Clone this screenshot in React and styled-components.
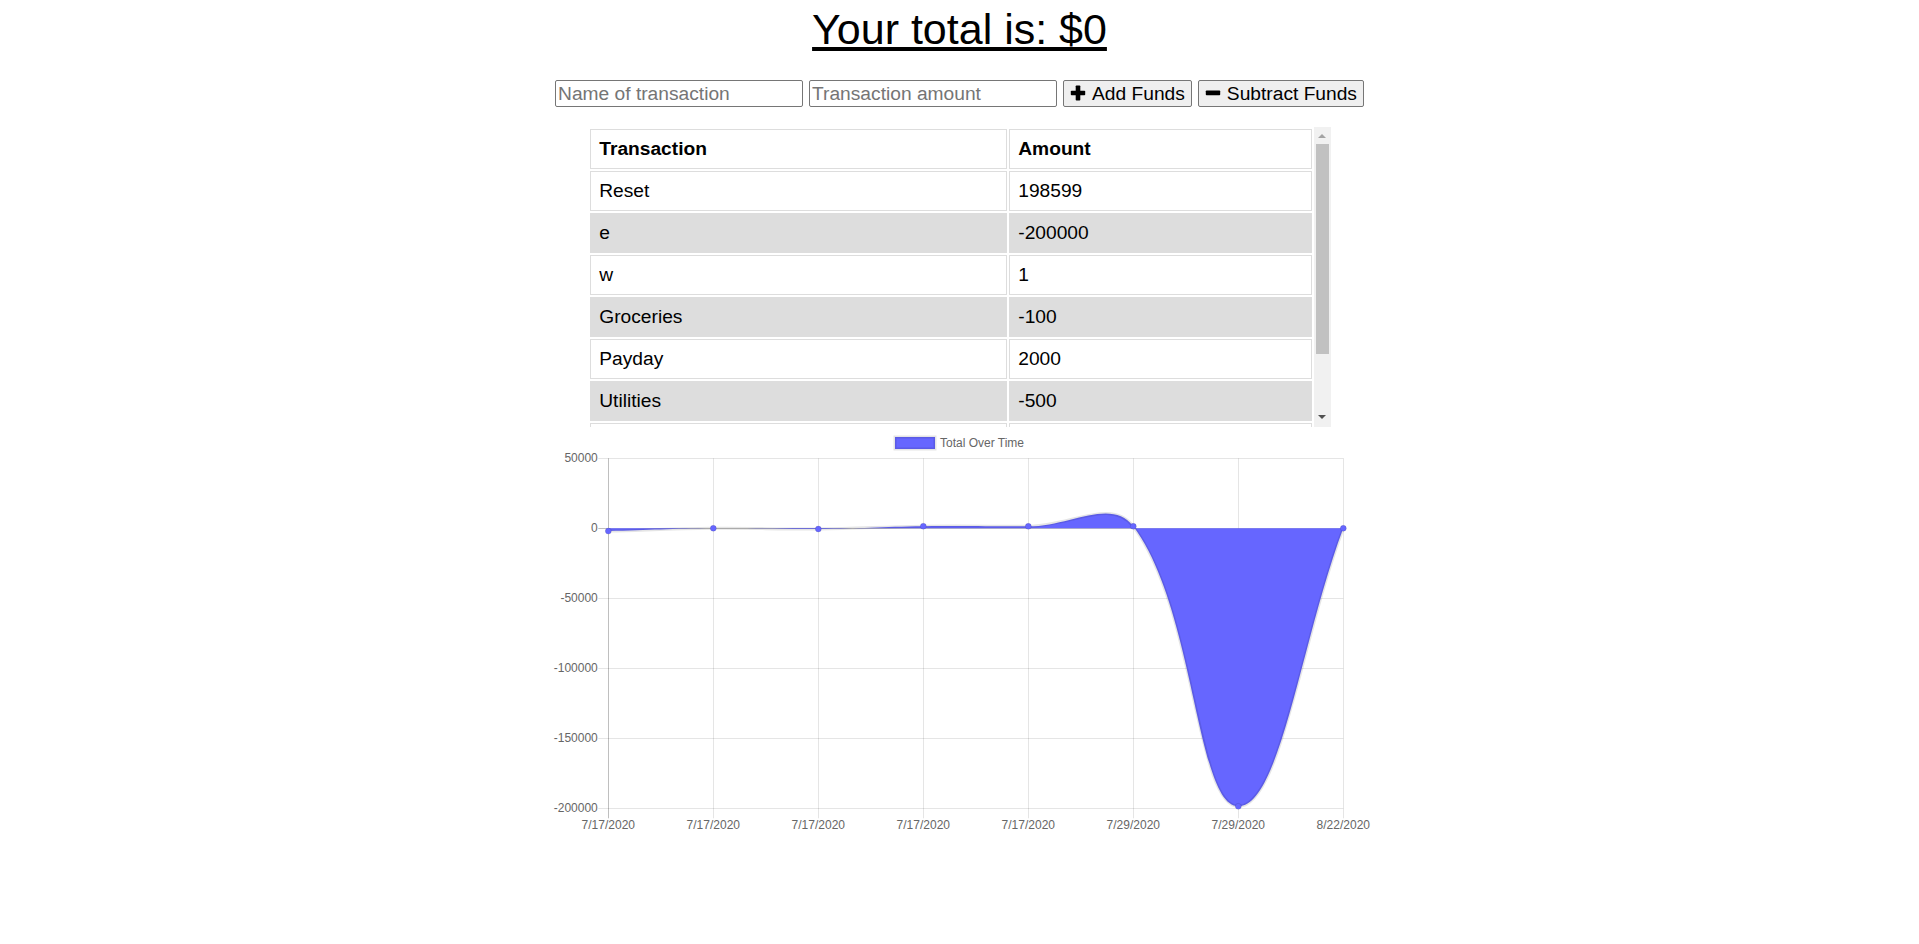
import React from "react";
import styled, { createGlobalStyle } from "styled-components";

const GlobalStyle = createGlobalStyle`
  html, body { margin: 0; padding: 0; background: #fff; }
  body {
    font-family: "Liberation Sans", Arial, Helvetica, sans-serif;
    font-size: 19.2px;
    color: #000;
  }
`;

const Wrapper = styled.div`
  width: 825px;
  margin: 0 auto;
  padding-top: 5px;
  text-align: center;
`;

const Total = styled.div`
  font-size: 43px;
  line-height: 49px;
  text-decoration: underline;
`;

const Form = styled.div`
  display: flex;
  justify-content: center;
  align-items: center;
  gap: 6px;
  margin-top: 26px;
  height: 27px;
`;

const TextInput = styled.input`
  box-sizing: border-box;
  width: 248px;
  height: 27px;
  margin: 0;
  padding: 1px 2px;
  font-family: inherit;
  font-size: 19.2px;
  color: #000;
  background: #fff;
  border: 1px solid #767676;
  border-radius: 2px;
  outline: none;
  &::placeholder { color: #757575; }
`;

const FundButton = styled.button`
  box-sizing: border-box;
  height: 27px;
  margin: 0;
  display: inline-flex;
  align-items: center;
  gap: 6px;
  padding: 0 6px;
  font-family: inherit;
  font-size: 19.2px;
  color: #000;
  background: #efefef;
  border: 1px solid #767676;
  border-radius: 2px;
`;

const Icon = styled.svg`
  width: 16px;
  height: 16px;
  flex: none;
  margin-top: -2px;
`;

const Transactions = styled.div`
  width: 742.5px;
  height: 300px;
  margin: 20px auto 0;
  display: flex;
  text-align: left;
`;

const Viewport = styled.div`
  flex: 1;
  min-width: 0;
  height: 300px;
  overflow-y: auto;
  overflow-x: hidden;
  scrollbar-width: none;
  &::-webkit-scrollbar { display: none; }
`;

const ScrollTrack = styled.div`
  flex: none;
  width: 17px;
  height: 300px;
  background: #f1f1f1;
  display: flex;
  flex-direction: column;
`;

const ScrollArrow = styled.div`
  flex: none;
  height: 17px;
  display: flex;
  justify-content: center;
  align-items: flex-start;
  padding-top: ${(p) => (p.$down ? "5px" : "6.5px")};
  box-sizing: border-box;
  margin-top: ${(p) => (p.$down ? "auto" : "0")};
  &::before {
    content: "";
    width: 0;
    height: 0;
    border-left: 4px solid transparent;
    border-right: 4px solid transparent;
    ${(p) =>
      p.$down
        ? "border-top: 4px solid #505050;"
        : "border-bottom: 4px solid #a3a3a3;"}
  }
`;

const ScrollThumb = styled.div`
  flex: none;
  height: 210px;
  margin: 0 2px;
  background: #c1c1c1;
`;

const Table = styled.table`
  width: 100%;
  border-collapse: separate;
  border-spacing: 2px;
  table-layout: fixed;
`;

const Cell = styled.td`
  box-sizing: border-box;
  padding: 8px;
  border: 1px solid #ddd;
  line-height: 22px;
  text-align: left;
  font-weight: ${(p) => (p.$head ? 700 : 400)};
  background: ${(p) => (p.$shaded ? "#ddd" : "#fff")};
  width: ${(p) => (p.$first ? "417px" : "auto")};
`;

const ChartBox = styled.div`
  width: 825px;
  height: 412px;
`;

const ChartSvg = styled.svg`
  display: block;
  font-family: "Liberation Sans", Arial, Helvetica, sans-serif;
`;

const rows = [
  ["Reset", "198599", "8/22/2020"],
  ["e", "-200000", "7/29/2020"],
  ["w", "1", "7/29/2020"],
  ["Groceries", "-100", "7/17/2020"],
  ["Payday", "2000", "7/17/2020"],
  ["Utilities", "-500", "7/17/2020"],
  ["Bonus", "2000", "7/17/2020"],
  ["Rent", "-2000", "7/17/2020"],
];

const PlusIcon = () => (
  <Icon viewBox="0 0 16 16">
    <rect x="5.7" y="0.5" width="4.6" height="15" rx="0.8" fill="#000" />
    <rect x="0.8" y="5.7" width="14.4" height="4.6" rx="0.8" fill="#000" />
  </Icon>
);

const MinusIcon = () => (
  <Icon viewBox="0 0 16 16">
    <rect x="0.8" y="5.4" width="14.4" height="4.8" rx="0.8" fill="#000" />
  </Icon>
);

const L = 61.3;
const STEP = 105;
const Z = 101.3;
const PX = 70 / 50000;
const xAt = (i) => L + STEP * i;
const yAt = (v) => Z - v * PX;
const TOP = yAt(50000);
const BOTTOM = yAt(-200000);
const RIGHT = xAt(7);
const align = (v) => Math.round(v - 0.5) + 0.5;

function buildPoints() {
  const chrono = rows.slice().reverse();
  let sum = 0;
  return chrono.map((r, i) => {
    sum += parseInt(r[1], 10);
    return { x: xAt(i), y: yAt(sum), label: r[2] };
  });
}

function splinePath(pts, t = 0.4) {
  const cx = (v) => Math.max(L, Math.min(RIGHT, v));
  const cy = (v) => Math.max(TOP, Math.min(BOTTOM, v));
  const cps = pts.map((p, i) => {
    const prev = pts[i - 1] || p;
    const next = pts[i + 1] || p;
    const d01 = Math.hypot(p.x - prev.x, p.y - prev.y);
    const d12 = Math.hypot(next.x - p.x, next.y - p.y);
    let s01 = d01 / (d01 + d12);
    let s12 = d12 / (d01 + d12);
    if (isNaN(s01)) s01 = 0;
    if (isNaN(s12)) s12 = 0;
    const fa = t * s01;
    const fb = t * s12;
    return {
      px: cx(p.x - fa * (next.x - prev.x)),
      py: cy(p.y - fa * (next.y - prev.y)),
      nx: cx(p.x + fb * (next.x - prev.x)),
      ny: cy(p.y + fb * (next.y - prev.y)),
    };
  });
  let d = `M${pts[0].x},${pts[0].y}`;
  for (let i = 1; i < pts.length; i++) {
    d += ` C${cps[i - 1].nx},${cps[i - 1].ny} ${cps[i].px},${cps[i].py} ${pts[i].x},${pts[i].y}`;
  }
  return d;
}

const Chart = () => {
  const pts = buildPoints();
  const line = splinePath(pts);
  const area = `${line} L${pts[pts.length - 1].x},${Z} L${pts[0].x},${Z} Z`;
  const yTicks = [50000, 0, -50000, -100000, -150000, -200000];
  return (
    <ChartSvg width="825" height="412" viewBox="0 0 825 412">
      <rect x="348" y="10" width="40" height="12" fill="#6666ff" stroke="rgba(0,0,0,0.1)" strokeWidth="3" />
      <text x="393" y="20.3" fontSize="12" fill="#666">Total Over Time</text>

      {pts.map((p, i) => (
        <line
          key={`v${i}`}
          x1={align(p.x)}
          x2={align(p.x)}
          y1={TOP}
          y2={BOTTOM + 10}
          stroke={i === 0 ? "rgba(0,0,0,0.25)" : "rgba(0,0,0,0.1)"}
          strokeWidth="1"
        />
      ))}
      {yTicks.map((v) => (
        <line
          key={`h${v}`}
          x1={L - 10}
          x2={RIGHT}
          y1={align(yAt(v))}
          y2={align(yAt(v))}
          stroke={v === 0 ? "rgba(0,0,0,0.25)" : "rgba(0,0,0,0.1)"}
          strokeWidth="1"
        />
      ))}
      {yTicks.map((v) => (
        <text key={`yl${v}`} x={L - 10.5} y={yAt(v) + 3.8} fontSize="12" fill="#666" textAnchor="end">
          {v}
        </text>
      ))}
      {pts.map((p, i) => (
        <text key={`xl${i}`} x={p.x} y="402" fontSize="12" fill="#666" textAnchor="middle">
          {p.label}
        </text>
      ))}

      <path d={area} fill="#6666ff" />
      <path d={line} fill="none" stroke="rgba(0,0,0,0.1)" strokeWidth="3" />
      {pts.map((p, i) => (
        <circle key={`p${i}`} cx={p.x} cy={p.y} r="3" fill="#6666ff" stroke="rgba(0,0,0,0.1)" strokeWidth="1" />
      ))}
    </ChartSvg>
  );
};

export default function App() {
  return (
    <>
      <GlobalStyle />
      <Wrapper>
        <Total>Your total is: $0</Total>
        <Form>
          <TextInput type="text" placeholder="Name of transaction" />
          <TextInput type="number" placeholder="Transaction amount" />
          <FundButton>
            <PlusIcon />
            Add Funds
          </FundButton>
          <FundButton>
            <MinusIcon />
            Subtract Funds
          </FundButton>
        </Form>
        <Transactions>
          <Viewport>
            <Table>
              <thead>
                <tr>
                  <Cell as="th" $head $first>Transaction</Cell>
                  <Cell as="th" $head>Amount</Cell>
                </tr>
              </thead>
              <tbody>
                {rows.map((r, i) => (
                  <tr key={i}>
                    <Cell $first $shaded={i % 2 === 1}>{r[0]}</Cell>
                    <Cell $shaded={i % 2 === 1}>{r[1]}</Cell>
                  </tr>
                ))}
              </tbody>
            </Table>
          </Viewport>
          <ScrollTrack aria-hidden="true">
            <ScrollArrow />
            <ScrollThumb />
            <ScrollArrow $down />
          </ScrollTrack>
        </Transactions>
        <ChartBox>
          <Chart />
        </ChartBox>
      </Wrapper>
    </>
  );
}
